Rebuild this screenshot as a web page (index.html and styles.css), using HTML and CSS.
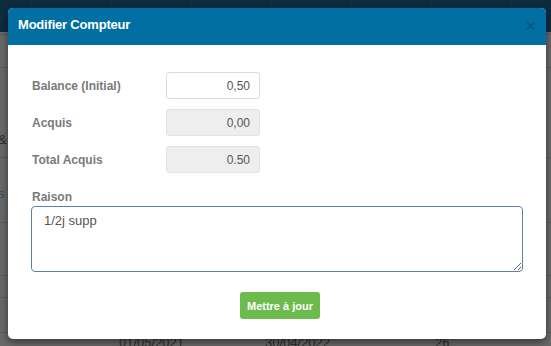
FILE: index.html
```html
<!DOCTYPE html>
<html lang="fr">
<head>
    <meta charset="UTF-8">
    <meta name="viewport" content="width=device-width, initial-scale=1.0">
    <title>Modifier Compteur</title>
    <link rel="stylesheet" href="styles.css">
</head>
<body>
    <div class="topbar"></div>
    <div class="page">
        <div class="row r1"></div>
        <div class="row r2"></div>
        <div class="row r3"><span>&amp;</span></div>
        <div class="row r4"><span>uis</span></div>
        <div class="row r5"></div>
        <div class="row r6"></div>
        <div class="row r7"></div>
        <div class="row r8">
            <span class="c1">01/05/2021</span>
            <span class="c2">30/04/2022</span>
            <span class="c3">26</span>
        </div>
    </div>

    <div class="modal">
        <div class="modal-header">
            <h4>Modifier Compteur</h4>
            <span class="close">&times;</span>
        </div>
        <div class="modal-body">
            <div class="form-row">
                <label>Balance (Initial)</label>
                <input type="text" value="0,50">
            </div>
            <div class="form-row">
                <label>Acquis</label>
                <input type="text" value="0,00" readonly>
            </div>
            <div class="form-row">
                <label>Total Acquis</label>
                <input type="text" value="0.50" readonly>
            </div>
            <label class="reason-label">Raison</label>
            <textarea>1/2j supp</textarea>
            <div class="actions">
                <button>Mettre à jour</button>
            </div>
        </div>
    </div>
</body>
</html>
```

FILE: styles.css
```css
body {
    font-family: "Liberation Sans", Arial, sans-serif;
    margin: 0;
    padding: 0;
    background-color: #6a6a6a;
    overflow: hidden;
    height: 346px;
}
.topbar {
    height: 32px;
    background-color: #0d2c40;
    background-image: radial-gradient(circle at 20px 40px, transparent 28px, #12364d 29px, transparent 30px),
                      radial-gradient(circle at 60px 10px, transparent 28px, #12364d 29px, transparent 30px);
    background-size: 80px 60px;
}
.page {
    color: #2b2b2b;
    font-size: 13px;
}
.row {
    border-bottom: 1px solid #5c5c5c;
    position: relative;
}
.row span {
    position: absolute;
}
.r1 { height: 2px; }
.r2 { height: 32px; }
.r3 { height: 89px; }
.r3 span { left: -2px; top: 64px; }
.r4 { height: 64px; }
.r4 span { left: -12px; top: 28px; color: #2c4c66; }
.r5 { height: 52px; }
.r6 { height: 21px; }
.r7 { height: 34px; }
.r8 { height: 20px; }
.r8 .c1 { left: 119px; top: 2px; }
.r8 .c2 { left: 265px; top: 2px; }
.r8 .c3 { left: 435px; top: 2px; }

.modal {
    position: absolute;
    top: 8px;
    left: 8px;
    width: 538px;
    height: 331px;
    background-color: white;
    border-radius: 5px;
    box-shadow: 0 3px 9px rgba(0, 0, 0, 0.5);
    overflow: hidden;
}
.modal-header {
    background-color: #016fa1;
    height: 37px;
    box-sizing: border-box;
    display: flex;
    align-items: center;
    justify-content: space-between;
    padding: 0 10px;
}
.modal-header h4 {
    margin: 0 0 5px 0;
    color: white;
    font-size: 13px;
    font-weight: bold;
    letter-spacing: -0.2px;
}
.close {
    color: rgba(0, 0, 0, 0.2);
    font-size: 18px;
    font-weight: bold;
    line-height: 1;
    margin-bottom: 1px;
}
.modal-body {
    padding: 27px 23px 0 23px;
}
.form-row {
    display: flex;
    align-items: center;
    margin-bottom: 10px;
}
.form-row label {
    width: 134px;
    padding-left: 1px;
    color: #7a7a7a;
    font-size: 12px;
    font-weight: bold;
}
.form-row input {
    box-sizing: border-box;
    width: 94px;
    height: 27px;
    border: 1px solid #dcdcdc;
    border-radius: 3px;
    padding: 0 9px;
    text-align: right;
    font-family: inherit;
    font-size: 12px;
    color: #555;
    outline: none;
}
.form-row input[readonly] {
    background-color: #eeeeee;
    border-color: #e2e2e2;
}
.reason-label {
    display: block;
    margin: 17px 0 2px 1px;
    color: #7a7a7a;
    font-size: 12px;
    font-weight: bold;
}
textarea {
    box-sizing: border-box;
    display: block;
    width: 492px;
    height: 66px;
    border: 1px solid #5f80a6;
    border-radius: 4px;
    padding: 6px 12px;
    font-family: inherit;
    font-size: 13px;
    color: #555;
    outline: none;
}
.actions {
    display: flex;
    justify-content: center;
    padding-top: 20px;
}
.actions button {
    background-color: #6cbb4c;
    border: none;
    border-radius: 3px;
    color: white;
    font-family: inherit;
    font-size: 11px;
    font-weight: bold;
    width: 80px;
    height: 27px;
    padding: 0;
    margin-left: 6px;
}
```
